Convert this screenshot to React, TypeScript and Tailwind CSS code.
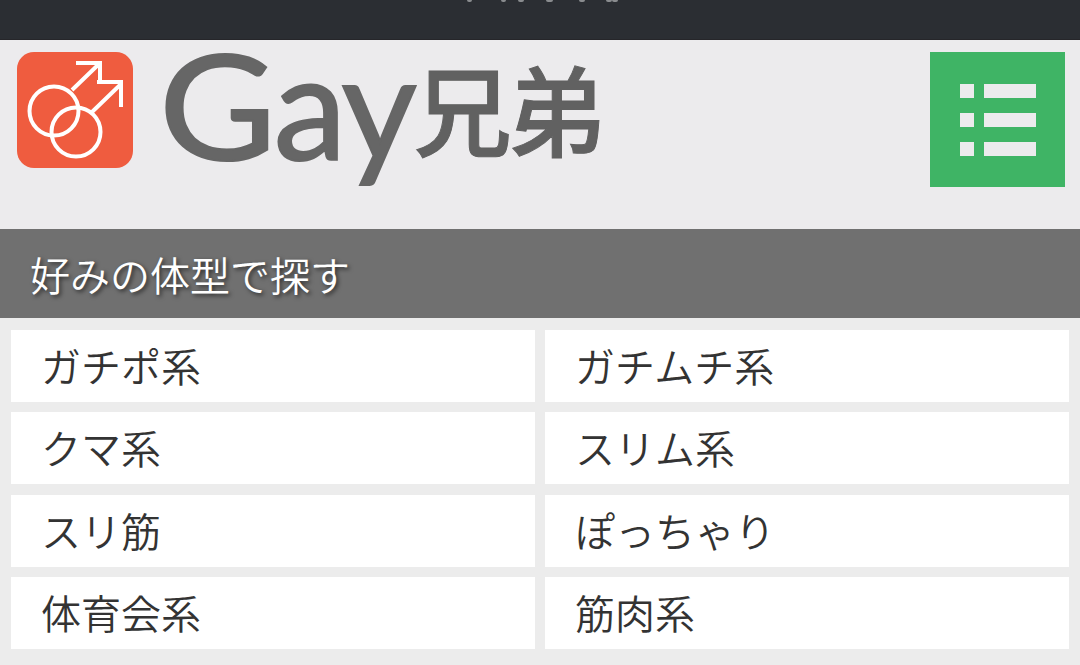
import React from 'react'

const rows = [
  ['ガチポ系', 'ガチムチ系'],
  ['クマ系', 'スリム系'],
  ['スリ筋', 'ぽっちゃり'],
  ['体育会系', '筋肉系'],
]

const cjk = { fontFamily: '"Noto Sans CJK JP", "Noto Sans", sans-serif' }

// the status text is cut off by the top edge, only these specks of it show
const specks = [
  [57, 5], [29, 5], [12, 6], [22, 7], [26, 6], [21, 6], [0, 6],
]

const LogoMark = () => (
  <svg viewBox="0 0 116 116" className="w-[116px] h-[116px] shrink-0">
    <rect width="116" height="116" rx="17" fill="#ef5c3f" />
    <g fill="none" stroke="#fff" strokeWidth="4">
      <circle cx="37" cy="59" r="24.5" />
      <circle cx="59" cy="80" r="24.5" />
      <path d="M55 38 L82 12 M59 11 H83 V29" />
      <path d="M75 60 L103 33 M80 30 H104 V55" />
    </g>
  </svg>
)

const App: React.FC = () => {
  return (
    <div className="w-[1080px] h-[665px] overflow-hidden bg-[#ececec]" style={cjk}>
      <div className="h-10 bg-[#2b2e33] border-b border-[#26262a] flex items-start pl-[467px]">
        {specks.map(([gap, w], i) => (
          <div key={i} className="h-[2px] bg-[#8a8c8f] rounded-b-full" style={{ marginLeft: i === 0 ? 0 : gap, width: w }} />
        ))}
      </div>

      <header className="h-[189px] bg-[#ecebed] flex items-start justify-between pl-[17px] pr-[15px] pt-3">
        <div className="flex items-start">
          <LogoMark />
          <div className="flex items-start ml-[26px] text-[#666666] blur-[0.5px]">
            <span
              className="text-[146px] leading-[104px] [-webkit-text-stroke:2px_#666666]"
              style={{ fontFamily: 'Lato, sans-serif', fontWeight: 400 }}
            >
              <span className="inline-block origin-left scale-x-[1.1] mr-[8px]">G</span>
              <span className="tracking-[-3px]">ay</span>
            </span>
            <span className="text-[98px] leading-[108px] font-medium tracking-[-4px] text-[#616161] [-webkit-text-stroke:1px_#616161]">兄弟</span>
          </div>
        </div>
        <button className="w-[135px] h-[135px] bg-[#3fb465] flex flex-col items-center justify-center gap-[15px]">
          {[0, 1, 2].map((i) => (
            <div key={i} className="flex gap-[10px]">
              <div className="w-[14px] h-[14px] bg-[#ecebed]" />
              <div className="w-[52px] h-[14px] bg-[#ecebed]" />
            </div>
          ))}
        </button>
      </header>

      <div className="h-[89px] bg-[#707070] flex items-center pl-[30px]">
        <h2 className="text-[40px] font-[350] leading-none text-white [text-shadow:2px_2px_4px_rgba(0,0,0,0.6)]">
          好みの体型で探す
        </h2>
      </div>

      <div className="grid grid-cols-2 gap-x-[10px] gap-y-[10.4px] px-[11px] pt-[12px]">
        {rows.flat().map((label) => (
          <a key={label} className="h-[72px] bg-white flex items-center pl-[30px] pb-[2px] text-[40px] font-[350] leading-none text-[#333333]">
            {label}
          </a>
        ))}
      </div>
    </div>
  )
}

export default App
